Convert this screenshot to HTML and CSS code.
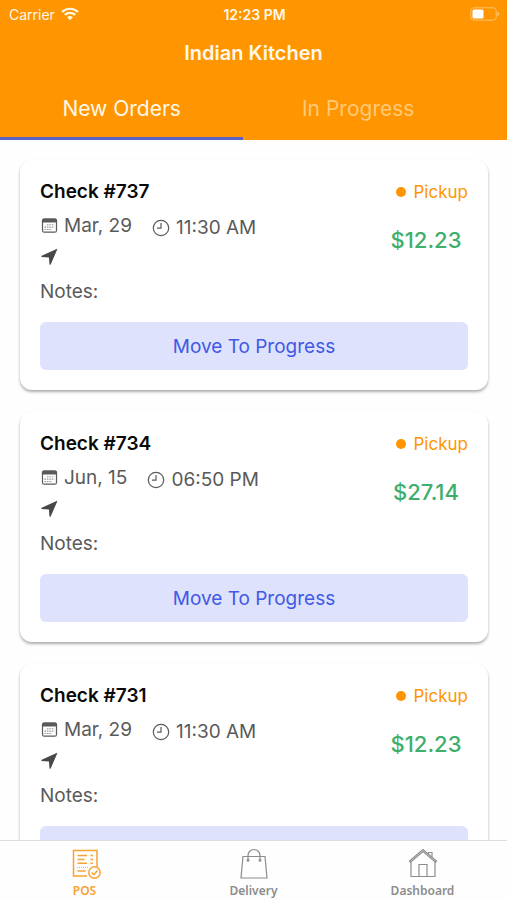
FILE: index.html
```html
<!DOCTYPE html>
<html lang="en">
<head>
<meta charset="utf-8">
<meta name="viewport" content="width=device-width, initial-scale=1">
<title>Indian Kitchen</title>
<link rel="stylesheet" href="styles.css">
</head>
<body>
<svg class="defs" aria-hidden="true">
  <symbol id="calendar" viewBox="0 0 18 18">
    <rect x="2.500" y="2.200" width="14" height="13" rx="1.800" fill="none" stroke="currentColor" stroke-width="1.200"/>
    <path d="M1.900 5.400V3.600a2 2 0 0 1 2-2h11.200a2 2 0 0 1 2 2v1.800z" fill="currentColor"/>
    <path d="M7 7.700h7.500M4.500 10.100h10M4.500 12.500h7.500" fill="none" stroke="currentColor" stroke-opacity=".65" stroke-width="1.100" stroke-dasharray="1.500 .9"/>
  </symbol>
  <symbol id="clock" viewBox="0 0 18 18">
    <circle cx="9" cy="9" r="7.700" fill="none" stroke="currentColor" stroke-width="1.200"/>
    <path d="M9 4v5.200H5" fill="none" stroke="currentColor" stroke-width="1.200"/>
  </symbol>
  <symbol id="navigate" viewBox="0 0 18 18">
    <path d="M16.600.9Q17.500.7 17.200 1.500L10.700 16.400q-.8.900-1.200-.2L8.900 9.400 1.800 8.900q-1.200-.4-.1-1.200z" fill="currentColor"/>
  </symbol>
</svg>

<header class="header">
  <div class="status">
    <div class="carrier">Carrier
      <svg class="wifi" viewBox="0 0 18 14" aria-hidden="true">
        <path d="M1 5a11.500 11.500 0 0 1 16 0M3.800 7.900a7.500 7.500 0 0 1 10.400 0" fill="none" stroke="currentColor" stroke-width="2.200"/>
        <path d="M6.100 10.300a4.200 4.200 0 0 1 5.800 0L9 13.300z" fill="currentColor"/>
      </svg>
    </div>
    <div class="time">12:23 PM</div>
    <svg class="battery" viewBox="0 0 30 14" role="img" aria-label="Battery">
      <rect x=".8" y=".8" width="25.400" height="12.400" rx="3" fill="none" stroke="currentColor" stroke-opacity=".45"/>
      <rect x="2.500" y="2.500" width="11" height="9" rx="1.500" fill="#fff"/>
      <path d="M27.500 4.800q1.800.8 1.800 2.200t-1.800 2.200z" fill="currentColor" fill-opacity=".5"/>
    </svg>
  </div>
  <h1 class="title">Indian Kitchen</h1>
  <div class="tabs" role="tablist">
    <button class="tab tab-active" role="tab" aria-selected="true">New Orders</button>
    <button class="tab" role="tab" aria-selected="false">In Progress</button>
  </div>
</header>

<main class="orders">
  <article class="card">
    <div class="details">
      <div class="info">
        <h2 class="check">Check #737</h2>
        <div class="when">
          <span class="meta"><svg class="icon"><use href="#calendar"/></svg>Mar, 29</span>
          <span class="meta meta-time"><svg class="icon"><use href="#clock"/></svg>11:30 AM</span>
        </div>
        <div class="address"><svg class="icon"><use href="#navigate"/></svg></div>
        <p class="notes">Notes:</p>
      </div>
      <div class="side">
        <span class="type">Pickup</span>
        <span class="price">$12.23</span>
      </div>
    </div>
    <button class="move">Move To Progress</button>
  </article>

  <article class="card">
    <div class="details">
      <div class="info">
        <h2 class="check">Check #734</h2>
        <div class="when">
          <span class="meta"><svg class="icon"><use href="#calendar"/></svg>Jun, 15</span>
          <span class="meta meta-time"><svg class="icon"><use href="#clock"/></svg>06:50 PM</span>
        </div>
        <div class="address"><svg class="icon"><use href="#navigate"/></svg></div>
        <p class="notes">Notes:</p>
      </div>
      <div class="side">
        <span class="type">Pickup</span>
        <span class="price">$27.14</span>
      </div>
    </div>
    <button class="move">Move To Progress</button>
  </article>

  <article class="card">
    <div class="details">
      <div class="info">
        <h2 class="check">Check #731</h2>
        <div class="when">
          <span class="meta"><svg class="icon"><use href="#calendar"/></svg>Mar, 29</span>
          <span class="meta meta-time"><svg class="icon"><use href="#clock"/></svg>11:30 AM</span>
        </div>
        <div class="address"><svg class="icon"><use href="#navigate"/></svg></div>
        <p class="notes">Notes:</p>
      </div>
      <div class="side">
        <span class="type">Pickup</span>
        <span class="price">$12.23</span>
      </div>
    </div>
    <button class="move">Move To Progress</button>
  </article>
</main>

<nav class="nav">
  <a class="nav-item nav-active" href="#pos" aria-current="page">
    <svg class="nav-icon" viewBox="0 0 32 32" fill="none" stroke="currentColor" stroke-width="1.500" aria-hidden="true">
      <path d="M18 29H4.500V3.500H28V20"/>
      <path d="M8.500 8.500h9.500M8.500 12.500h7M8.500 16.300h9.500M8.500 24h8"/>
      <path d="M21.500 8.500H24M21.500 12.500H24M21.500 16.300H24"/>
      <path d="M8 20.300h12" stroke-width="1" stroke-dasharray="1 1"/>
      <circle cx="25.500" cy="25.500" r="5.700"/>
      <path d="m22.700 25.500 2.200 2.200 3.600-4.200"/>
    </svg>
    POS
  </a>
  <a class="nav-item" href="#delivery">
    <svg class="nav-icon" viewBox="0 0 32 32" fill="none" stroke="currentColor" stroke-width="1.200" aria-hidden="true">
      <path d="M5 9.500h22L29 31H3z"/>
      <path d="M10 13V8.500a6 6 0 0 1 12 0V13"/>
      <circle cx="10" cy="13.300" r=".9"/>
      <circle cx="22" cy="13.300" r=".9"/>
    </svg>
    Delivery
  </a>
  <a class="nav-item" href="#dashboard">
    <svg class="nav-icon" viewBox="0 0 32 32" fill="none" stroke="currentColor" stroke-width="1.200" aria-hidden="true">
      <path d="M2.500 14 16 2.500 29.500 14l-1 1.200L16 4.600 3.500 15.200z"/>
      <path d="M4 15v14.500h24V15"/>
      <path d="M12 29.500v-12h8v12M21.500 7V5.500H25V10"/>
    </svg>
    Dashboard
  </a>
</nav>
</body>
</html>
```

FILE: styles.css
```css
* {
  box-sizing: border-box;
}

body {
  margin: 0;
  height: 100vh;
  display: flex;
  flex-direction: column;
  background: #fefefe;
  color: #5a5a5a;
  font-family: Inter, "Liberation Sans", sans-serif;
  font-size: 19px;
}

h1,
h2,
p {
  margin: 0;
}

button {
  border: 0;
  font: inherit;
  cursor: pointer;
}

.defs {
  display: none;
}

.header {
  flex: none;
  background: #ff9500;
  color: #fff8e8;
}

.status {
  display: grid;
  grid-template-columns: 1fr auto 1fr;
  align-items: center;
  height: 28px;
  padding: 0 7px 0 9px;
  font-size: 14px;
}

.carrier {
  display: flex;
  align-items: center;
  gap: 6px;
}

.wifi {
  width: 18px;
  height: 14px;
}

.time {
  font-weight: 600;
}

.battery {
  justify-self: end;
  width: 30px;
  height: 14px;
}

.title {
  height: 50px;
  line-height: 50px;
  text-align: center;
  font-size: 20px;
  font-weight: 600;
}

.tabs {
  display: flex;
}

.tab {
  flex: 1;
  height: 62px;
  padding: 2px 0 0;
  border-bottom: 3px solid transparent;
  background: none;
  color: #ffc978;
  font-size: 21px;
}

.tab:first-child {
  flex: 0 0 48%;
}

.tab:last-child {
  padding-right: 34px;
}

.tab-active {
  border-bottom-color: #5b62c4;
  color: #fff8e8;
}

.orders {
  flex: 1;
  min-height: 0;
  display: flex;
  flex-direction: column;
  gap: 22px;
  padding: 20px 19px 20px 20px;
  overflow-y: auto;
  scrollbar-width: none;
}

.card {
  flex: none;
  padding: 20px;
  border-radius: 12px;
  background: #fff;
  box-shadow: 0 2px 3px rgba(0, 0, 0, 0.32);
}

.details {
  display: flex;
  justify-content: space-between;
}

.check {
  height: 32px;
  line-height: 24px;
  color: #0a0a0a;
  font-size: 19px;
  font-weight: 600;
}

.when {
  display: flex;
  gap: 20px;
  height: 36px;
  line-height: 28px;
}

.meta {
  display: flex;
  align-items: center;
  gap: 6px;
  height: 28px;
}

.meta-time {
  margin-top: 2px;
}

.icon {
  display: block;
  width: 18px;
  height: 18px;
}

.address {
  height: 32px;
  color: #484848;
}

.notes {
  height: 42px;
  line-height: 24px;
}

.side {
  display: flex;
  flex-direction: column;
  width: 84px;
}

.type {
  display: flex;
  align-items: center;
  justify-content: flex-end;
  gap: 8px;
  height: 24px;
  color: #ff9500;
  font-size: 17px;
}

.type::before {
  content: "";
  width: 10px;
  height: 10px;
  border-radius: 50%;
  background: #ff9500;
}

.price {
  margin-top: 20px;
  line-height: 32px;
  text-align: center;
  color: #3fae6a;
  font-size: 22px;
  font-weight: 500;
}

.move {
  display: block;
  width: 100%;
  height: 48px;
  border-radius: 6px;
  background: #dee2fc;
  color: #4159e6;
}

.nav {
  flex: none;
  display: grid;
  grid-template-columns: repeat(3, 1fr);
  height: 60px;
  border-top: 1px solid #ddd;
  background: #fefefe;
}

.nav-item {
  display: flex;
  flex-direction: column;
  align-items: center;
  gap: 4px;
  padding-top: 6px;
  color: #8c8c8c;
  font-family: "Noto Sans", "Open Sans", sans-serif;
  font-size: 12px;
  font-weight: 600;
  line-height: 16px;
  text-decoration: none;
}

.nav-icon {
  width: 32px;
  height: 32px;
}

.nav-active {
  color: #f7a233;
}
```
